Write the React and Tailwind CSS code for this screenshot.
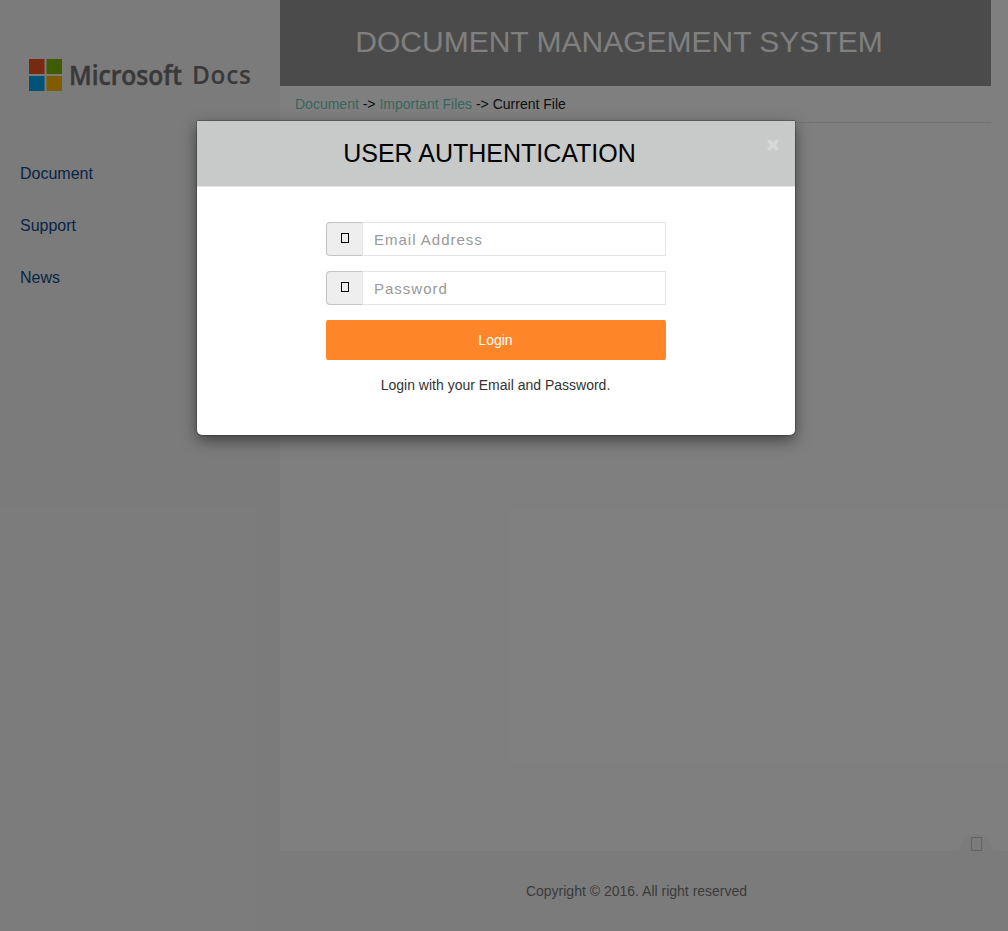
import React from "react";

function Logo() {
  return (
    <svg className="block h-[40px] w-[230px]" viewBox="0 0 230 40" aria-label="Microsoft Docs">
      <rect x="5" y="4" width="15.5" height="15" fill="#f25022" />
      <rect x="22.5" y="4" width="15.5" height="15" fill="#7fba00" />
      <rect x="5" y="21" width="15.5" height="15" fill="#00a4ef" />
      <rect x="22.5" y="21" width="15.5" height="15" fill="#ffb900" />
      <g fill="#737373" stroke="#737373" fontFamily="'Open Sans', sans-serif" fontWeight="600">
        <text x="45" y="30" fontSize="26.5" strokeWidth="0.5" textLength="113" lengthAdjust="spacingAndGlyphs">Microsoft</text>
        <text x="168" y="29" fontSize="24.5" strokeWidth="0" textLength="59" lengthAdjust="spacing">Docs</text>
      </g>
    </svg>
  );
}

function Field({ label, type }) {
  return (
    <div className="flex h-[34px]">
      <span className="flex w-[36px] items-center justify-center rounded-l-[4px] border border-r-0 border-[#c4c4c4] bg-[#eeeeee]">
        <span className="mb-[2px] h-[10px] w-[8px] border border-black" />
      </span>
      <input
        type={type}
        placeholder={label}
        className="w-[304px] border border-[#e5e5e5] bg-white pt-[2px] pl-[11px] text-[15px] tracking-[1px] outline-none placeholder:text-[#999999]"
      />
    </div>
  );
}

function Modal() {
  return (
    <div className="absolute top-[121px] left-[197px] h-[314px] w-[598px] overflow-visible rounded-b-[5px] rounded-t-[1px] bg-white shadow-[0_0_0_1px_rgba(0,0,0,0.2),0_5px_15px_rgba(0,0,0,0.5)]">
      <div className="relative h-[66px] border-b border-[#e5e5e5] bg-[#c8cac9] text-center">
        <h4 className="pt-[14px] pr-[13px] text-[25px] leading-[36px] text-black">USER AUTHENTICATION</h4>
        <button className="absolute top-[18px] right-[16px]" aria-label="Close">
          <svg className="block h-[12px] w-[12px]" viewBox="0 0 12 12">
            <path d="M2.5 2.5 9.5 9.5M9.5 2.5 2.5 9.5" stroke="#d6d8d7" strokeWidth="4" strokeLinecap="round" />
          </svg>
        </button>
      </div>
      <div className="ml-[129px] flex w-[340px] flex-col gap-[15px] pt-[35px]">
        <Field label="Email Address" type="text" />
        <Field label="Password" type="password" />
        <button className="h-[40px] rounded-[2px] bg-[#ff8628] pr-px text-[14px] text-white">Login</button>
        <p className="pr-px text-center text-[14px] leading-[20px] text-[#333333]">Login with your Email and Password.</p>
      </div>
    </div>
  );
}

export default function App() {
  return (
    <div className="relative flex h-[931px] w-[1008px] overflow-hidden bg-white font-['Liberation_Sans',Arial,sans-serif] text-[14px]">
      <aside className="w-[280px] shrink-0 bg-[#f7f7f7] pt-[55px]">
        <div className="pl-[24px]">
          <Logo />
        </div>
        <nav className="flex flex-col gap-[28px] pt-[67px] pl-[20px] text-[16px] leading-[24px] text-[#11498c]">
          <a>Document</a>
          <a>Support</a>
          <a>News</a>
        </nav>
      </aside>
      <div className="flex flex-1 flex-col">
        <header className="mr-[17px] h-[86px] bg-[#969696] pr-[33px] pt-[22px] text-center">
          <h1 className="whitespace-nowrap text-[30px] leading-[40px] text-white">DOCUMENT MANAGEMENT SYSTEM</h1>
        </header>
        <div className="mr-[17px] h-[37px] border-b border-[#e7e7e7] pt-[8px] pl-[15px] leading-[20px] text-[#222222]">
          <a className="text-[#74cbb8]">Document</a> -&gt; <a className="text-[#74cbb8]">Important Files</a> -&gt; <span className="text-[#222222]">Current File</span>
        </div>
        <main className="flex flex-1 items-end justify-end pr-[15px]">
          <div className="flex h-[17px] w-[34px] justify-center rounded-t-full bg-[#f7f7f7] pt-[3px]">
            <span className="h-[14px] w-[11px] border border-[#c8c8c8]" />
          </div>
        </main>
        <footer className="h-[80px] bg-[#f7f7f7] pt-[30px] pr-[15px] text-center leading-[20px] text-[#777777]">
          Copyright © 2016. All right reserved
        </footer>
      </div>
      <div className="absolute inset-0 bg-black/50" />
      <Modal />
    </div>
  );
}
